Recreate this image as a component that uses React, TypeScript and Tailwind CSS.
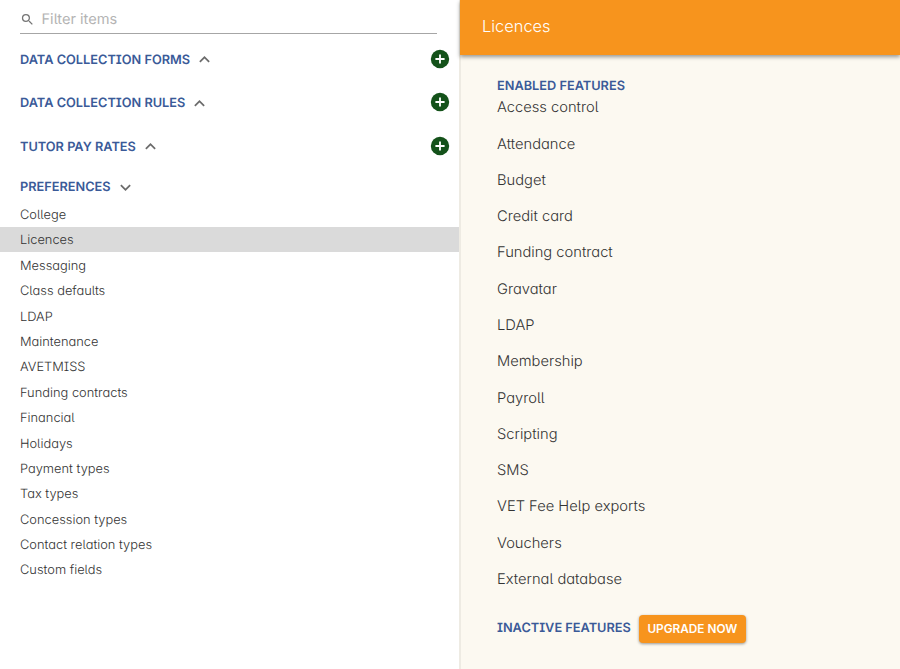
const FONT =
  "font-['Inter','Liberation_Sans',sans-serif] [font-feature-settings:'cv11','cv08','cv05'] [text-rendering:geometricPrecision]";

const sections = ["DATA COLLECTION FORMS", "DATA COLLECTION RULES", "TUTOR PAY RATES"];

const preferences = [
  "College", "Licences", "Messaging", "Class defaults", "LDAP", "Maintenance", "AVETMISS",
  "Funding contracts", "Financial", "Holidays", "Payment types", "Tax types",
  "Concession types", "Contact relation types", "Custom fields",
];

const features = [
  "Access control", "Attendance", "Budget", "Credit card", "Funding contract", "Gravatar",
  "LDAP", "Membership", "Payroll", "Scripting", "SMS", "VET Fee Help exports", "Vouchers",
  "External database",
];

function Chevron({ down = false }: { down?: boolean }) {
  return (
    <svg className="ml-1 size-[21px] shrink-0" viewBox="0 0 24 24" fill="#6b6b6b">
      <path d={down ? "M7.41 8.59 12 13.17l4.59-4.58L18 10l-6 6-6-6z" : "M12 8l-6 6 1.41 1.41L12 10.83l4.59 4.58L18 14z"} />
    </svg>
  );
}

export default function App() {
  return (
    <div className={`flex h-[669px] w-[900px] overflow-hidden bg-white ${FONT}`}>
      <aside className="flex w-[459px] shrink-0 flex-col">
        <div className="mx-5 mr-[22px] flex h-[34px] items-center border-b border-[#a6a6a6] pt-[5px]">
          <svg className="size-[15px]" viewBox="0 0 24 24" fill="#757575">
            <path d="M15.5 14h-.79l-.28-.27A6.47 6.47 0 0 0 16 9.5 6.5 6.5 0 1 0 9.5 16c1.61 0 3.09-.59 4.23-1.57l.27.28v.79l5 4.99L20.49 19l-4.99-5zm-6 0C7.01 14 5 11.99 5 9.5S7.01 5 9.5 5 14 7.01 14 9.5 11.99 14 9.5 14z" />
          </svg>
          <span className="ml-[6.5px] text-[14.6px] leading-5 text-[#b4b4b4]">Filter items</span>
        </div>
        <div className="pt-[3px]">
          {sections.map((label) => (
            <div key={label} className="flex h-[43.5px] items-center pr-2 pl-5">
              <div className="flex items-center pt-[2px]">
                <span className="pt-[2px] text-[12.75px] leading-5 font-semibold text-[#3a5a98]">{label}</span>
                <Chevron />
              </div>
              <svg className="ml-auto size-[22px]" viewBox="0 0 24 24">
                <circle cx="12" cy="12" r="10" fill="#14521a" />
                <path d="M11 7h2v4h4v2h-4v4h-2v-4H7v-2h4z" fill="#fff" />
              </svg>
            </div>
          ))}
        </div>
        <div className="flex h-[34px] items-center pt-[5px] pl-5">
          <span className="pt-px text-[12.75px] leading-5 font-semibold text-[#3a5a98]">PREFERENCES</span>
          <Chevron down />
        </div>
        <ul>
          {preferences.map((p) => (
            <li
              key={p}
              className={`flex h-[25.4px] items-center pt-[3.6px] pl-5 text-[12.85px] leading-5 font-light text-[#333] ${p === "Licences" ? "bg-[#dadada]" : ""}`}
            >
              {p}
            </li>
          ))}
        </ul>
      </aside>
      <main className="flex min-w-0 flex-1 flex-col border-l-2 border-[#eeebe3] bg-[#fcf9f1]">
        <header className="-ml-px flex h-[55px] shrink-0 items-center bg-[#f7941d] pb-[3px] pl-[22px] text-[16.4px] leading-6 font-light text-white shadow-[0_2px_4px_rgba(0,0,0,0.4)]">
          Licences
        </header>
        <section className="pt-[22px] pl-9">
          <h2 className="h-[16px] pt-px text-[12.75px] leading-[17px] font-semibold text-[#3a5a98]">ENABLED FEATURES</h2>
          <ul className="-mt-[3px]">
            {features.map((f) => (
              <li key={f} className="flex h-[36.27px] items-center pb-[1.5px] text-[14.7px] leading-5 font-light text-[#333]">
                {f}
              </li>
            ))}
          </ul>
          <div className="mt-[17px] flex items-center">
            <h2 className="pt-px text-[12.75px] leading-5 font-semibold text-[#3a5a98]">INACTIVE FEATURES</h2>
            <button className="ml-[8px] h-[28px] w-[107px] rounded-[4px] bg-[#f7941d] pt-[2px] text-[11.8px] font-semibold text-white shadow-[0_1px_3px_rgba(0,0,0,0.4)]">
              UPGRADE NOW
            </button>
          </div>
        </section>
      </main>
    </div>
  );
}
